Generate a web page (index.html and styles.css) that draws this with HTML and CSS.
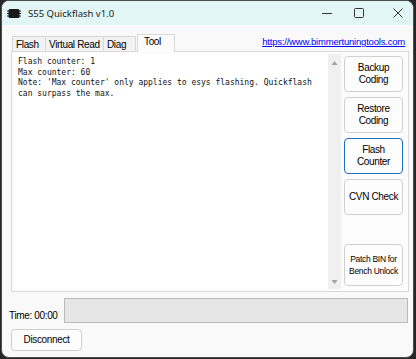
FILE: index.html
```html
<!DOCTYPE html>
<html>
<head>
<meta charset="utf-8">
<link rel="stylesheet" href="styles.css">
</head>
<body>
<div class="window">
  <div class="titlebar">
    <svg class="appicon" width="14" height="11" viewBox="0 0 14 11">
      <rect x="1.5" y="1" width="11" height="9" rx="1.5" fill="#1a1a1a"/>
      <rect x="0" y="2.5" width="2" height="1" fill="#1a1a1a"/>
      <rect x="0" y="5" width="2" height="1" fill="#1a1a1a"/>
      <rect x="0" y="7.5" width="2" height="1" fill="#1a1a1a"/>
      <rect x="12" y="2.5" width="2" height="1" fill="#1a1a1a"/>
      <rect x="12" y="5" width="2" height="1" fill="#1a1a1a"/>
      <rect x="12" y="7.5" width="2" height="1" fill="#1a1a1a"/>
    </svg>
    <span class="title">S55 Quickflash v1.0</span>
    <div class="controls">
      <svg class="ctl" width="10" height="24" viewBox="0 0 10 24"><path d="M0 12.5h10" stroke="#333" stroke-width="1"/></svg>
      <svg class="ctl max" width="10" height="24" viewBox="0 0 10 24"><rect x="0.5" y="7.5" width="9" height="9" rx="1" fill="none" stroke="#333" stroke-width="1"/></svg>
      <svg class="ctl close" width="10" height="24" viewBox="0 0 10 24"><path d="M0.5 7.5l9 9M9.5 7.5l-9 9" stroke="#333" stroke-width="1"/></svg>
    </div>
  </div>
  <div class="main">
    <div class="tabrow">
      <div class="tabs">
        <div class="tab t1">Flash</div>
        <div class="tab t2">Virtual Read</div>
        <div class="tab t3">Diag</div>
        <div class="tab active">Tool</div>
      </div>
      <a class="link" href="#">https://www.bimmertuningtools.com</a>
    </div>
    <div class="panel">
      <div class="textbox">
        <div class="text">Flash counter: 1
Max counter: 60
Note: 'Max counter' only applies to esys flashing. Quickflash
can surpass the max.</div>
        <div class="scrollbar">
          <svg width="13" height="8" viewBox="0 0 13 8"><path d="M3.5 6h6l-3-4z" fill="#a3a3a3"/></svg>
          <svg width="13" height="8" viewBox="0 0 13 8"><path d="M3.5 2h6l-3 4z" fill="#a3a3a3"/></svg>
        </div>
      </div>
      <div class="buttons">
        <div class="btn">Backup<br>Coding</div>
        <div class="btn">Restore<br>Coding</div>
        <div class="btn focus">Flash<br>Counter</div>
        <div class="btn">CVN Check</div>
        <div class="btn small">Patch BIN for<br>Bench Unlock</div>
      </div>
    </div>
    <div class="status">
      <span class="time">Time: 00:00</span>
      <div class="progress"></div>
    </div>
    <div class="btn disconnect">Disconnect</div>
  </div>
</div>
</body>
</html>
```

FILE: styles.css
```css
html, body {
  margin: 0;
  padding: 0;
  background: #262626;
  width: 416px;
  height: 359px;
  overflow: hidden;
}
.window {
  box-sizing: border-box;
  margin-left: 1px;
  width: 413px;
  height: 358px;
  border: 1px solid #4d4d4d;
  border-radius: 8px;
  background: #f9f9f9;
  overflow: hidden;
  display: flex;
  flex-direction: column;
  font-family: "Liberation Sans", Arial, sans-serif;
  font-size: 10px;
  letter-spacing: -0.35px;
  color: #000;
}
.titlebar {
  height: 24px;
  background: #e2f6f6;
  display: flex;
  align-items: center;
  padding-left: 5px;
  flex-shrink: 0;
}
.appicon { margin-right: 7px; }
.title {
  font-family: "Noto Sans", sans-serif;
  font-size: 9.5px;
  letter-spacing: 0;
  color: #1a1a1a;
}
.controls {
  margin-left: auto;
  display: flex;
  margin-right: 10px;
}
.ctl { display: block; }
.ctl.max { margin-left: 22px; }
.ctl.close { margin-left: 29px; }
.main {
  flex: 1;
  display: flex;
  flex-direction: column;
  padding: 8px 4px 0 7px;
}
.tabrow {
  display: flex;
  align-items: flex-end;
  height: 18px;
  padding-left: 3px;
}
.tabs {
  display: flex;
  align-items: flex-end;
}
.tab {
  height: 15px;
  box-sizing: border-box;
  border: 1px solid #d9d9d9;
  border-bottom: none;
  margin-right: -1px;
  background: #f2f2f2;
  padding: 2px 0 0 3px;
  line-height: 12px;
}
.t1 { width: 34px; }
.t2 { width: 59px; }
.t3 { width: 33px; }
.tab.active {
  width: 38px;
  height: 18px;
  background: #fcfcfc;
  margin-left: 2px;
  padding: 1px 0 0 6px;
  position: relative;
  top: 1px;
}
.link {
  margin-left: auto;
  margin-right: 4px;
  margin-bottom: 4px;
  font-size: 9.5px;
  letter-spacing: -0.2px;
  color: #0000ff;
  text-decoration: underline;
}
.panel {
  margin-left: 2px;
  width: 398px;
  height: 241px;
  box-sizing: border-box;
  border: 1px solid #dadada;
  background: #fcfcfc;
  display: flex;
  padding: 2px 4px 2px 2px;
}
.textbox {
  width: 327px;
  display: flex;
  background: #fff;
}
.text {
  flex: 1;
  white-space: pre;
  font-family: "DejaVu Sans Mono", monospace;
  font-size: 8px;
  letter-spacing: 0;
  line-height: 10.7px;
  padding: 3px 0 0 4px;
  color: #111;
}
.scrollbar {
  width: 13px;
  background: #f0f0f0;
  display: flex;
  flex-direction: column;
  justify-content: space-between;
  padding: 5px 0 3px 0;
}
.scrollbar svg { display: block; }
.buttons {
  margin-left: 3px;
  width: 59px;
  display: flex;
  flex-direction: column;
  gap: 5px;
  padding-top: 2px;
  padding-bottom: 3px;
}
.btn {
  box-sizing: border-box;
  height: 36px;
  border: 1px solid #d0d0d0;
  border-radius: 4px;
  background: #fdfdfd;
  display: flex;
  align-items: center;
  justify-content: center;
  text-align: center;
  line-height: 12px;
}
.btn.focus {
  border-color: #1f6fc5;
}
.btn.small {
  margin-top: auto;
  height: 42px;
  font-size: 8.5px;
  letter-spacing: -0.3px;
  line-height: 12px;
}
.status {
  display: flex;
  align-items: flex-end;
  margin-top: 6px;
}
.time {
  width: 55px;
  padding-bottom: 2px;
}
.progress {
  width: 344px;
  height: 25px;
  box-sizing: border-box;
  border: 1px solid #bcbcbc;
  background: #e6e6e6;
}
.disconnect {
  margin-top: 6px;
  margin-left: 2px;
  width: 71px;
  height: 22px;
}
```
